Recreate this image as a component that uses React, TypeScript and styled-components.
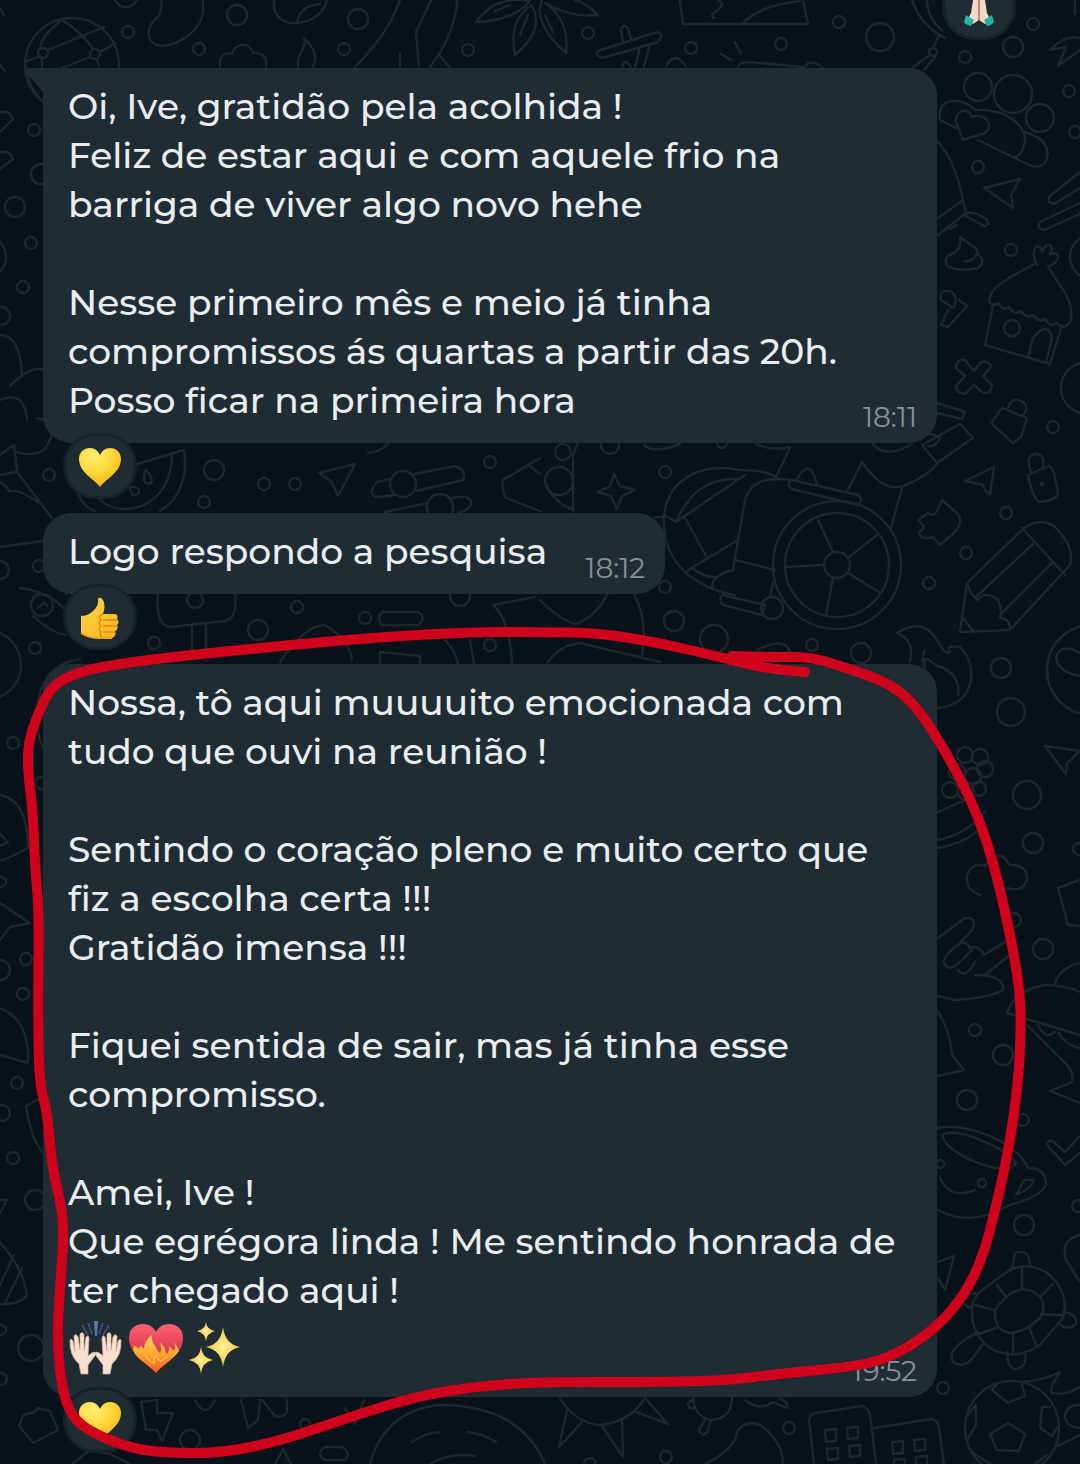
import React from "react"
import styled, {createGlobalStyle, css} from "styled-components"

const Color = {
  wall: "#07121a",
  doodle: "#1c272e",
  bubble: "#202c33",
  text: "#e9edef",
  time: "#87929a",
  marker: "#d0021b",
}

const GlobalStyle = createGlobalStyle`
  body {
    margin: 0;
    background: ${Color.wall};
    font-family: Montserrat, Inter, "Liberation Sans", sans-serif;
  }
`

let Screen = styled.main`
  position: relative;
  min-height: 100vh;
  overflow: hidden;
  background: ${Color.wall};
`
let Wallpaper = styled.svg`
  position: absolute;
  top: 0;
  left: 0;
  width: 100%;
  fill: none;
  stroke: ${Color.doodle};
  stroke-width: 2.4;
  stroke-linejoin: round;
  stroke-linecap: round;
`
let Marker = styled.svg`
  position: absolute;
  top: 0;
  left: 0;
  width: 100%;
  fill: none;
  stroke: ${Color.marker};
  stroke-width: 10;
  stroke-linejoin: round;
  stroke-linecap: round;
  pointer-events: none;
`
let Conversation = styled.div`
  position: relative;
  display: flex;
  flex-direction: column;
`
let Outgoing = styled.div`
  display: flex;
  justify-content: flex-end;
  align-items: flex-end;
  height: 40px;
  margin-bottom: 28px;
  padding-right: 64px;
`
let Thread = styled.div`
  display: flex;
  flex-direction: column;
  align-items: flex-start;
  gap: 14px;
  padding: 0 143px 0 43px;
`
let Message = styled.article<{$wide?: boolean}>`
  display: flex;
  flex-direction: column;
  align-items: flex-start;
  max-width: 100%;
  ${props => props.$wide && css`width: 100%;`}
`
let Bubble = styled.div<{$first?: boolean}>`
  position: relative;
  display: grid;
  box-sizing: border-box;
  width: 100%;
  padding: 14px 20px 18px 25px;
  border-radius: 28px;
  background: ${Color.bubble};
  ${props => props.$first && css`
    border-top-left-radius: 0;

    &::before {
      content: "";
      position: absolute;
      top: 0;
      left: -18px;
      width: 19px;
      height: 25px;
      background: ${Color.bubble};
      clip-path: path("M19 0H4Q-2 1 2 6L19 25Z");
    }
  `}
`
let Body = styled.div<{$inlineTime?: boolean}>`
  grid-area: 1 / 1;
  padding-right: ${props => props.$inlineTime ? 98 : 0}px;
`
let Text = styled.p`
  margin: 0;
  color: ${Color.text};
  font-size: 36px;
  font-weight: 500;
  line-height: 49px;
  white-space: pre-line;
`
let EmojiLine = styled.div`
  display: flex;
  gap: 6px;
  height: 58px;
  padding-top: 6px;
`
let Time = styled.time`
  grid-area: 1 / 1;
  place-self: end;
  color: ${Color.time};
  font-size: 28px;
  line-height: 32px;
  margin-bottom: -8px;
`
let Reaction = styled.button`
  display: flex;
  align-items: center;
  justify-content: center;
  width: 74px;
  height: 66px;
  margin: -10px 0 0 20px;
  padding: 3px 0 0;
  border: 3px solid #17222a;
  border-radius: 33px;
  background: ${Color.bubble};
  position: relative;
`

const HEART = "M22 40C16 32 1 25 1 12C1 5 6 1 12 1C17 1 20 4 22 8C24 4 27 1 32 1C38 1 43 5 43 12C43 25 28 32 22 40Z"

function YellowHeart() {
  return (
    <svg width="44" height="42" viewBox="0 0 44 42" role="img" aria-label="Coração amarelo">
      <defs>
        <radialGradient id="gold" cx="0.35" cy="0.2" r="0.9">
          <stop offset="0" stopColor="#ffed73"/>
          <stop offset="0.5" stopColor="#fdd835"/>
          <stop offset="1" stopColor="#f2a410"/>
        </radialGradient>
      </defs>
      <path d={HEART} fill="url(#gold)"/>
    </svg>
  )
}

function ThumbsUp() {
  return (
    <svg width="42" height="44" viewBox="0 0 42 44" role="img" aria-label="Joinha">
      <defs>
        <linearGradient id="skin" x2="1" y2="1">
          <stop offset="0" stopColor="#ffd54a"/>
          <stop offset="1" stopColor="#fbb41c"/>
        </linearGradient>
      </defs>
      <path d="M2 19Q9 19 14 14Q20 9 19 2Q21 -1 24 3Q27 9 24 17H36Q40 18 38 22Q41 25 38 28Q40 32 36 34Q38 39 33 41H19Q9 42 2 36Z" fill="url(#skin)"/>
      <path d="M24 23H38M24 29H38M24 35H36M24 17Q18 19 22 23Q18 26 22 29Q18 32 22 35Q20 38 24 41" fill="none" stroke="#e08a12" strokeWidth="1.4"/>
      <path d="M2 36Q10 41 19 41H33" fill="none" stroke="#eda515" strokeWidth="2"/>
    </svg>
  )
}

function PrayingHands() {
  return (
    <svg width="34" height="42" viewBox="0 0 34 42" role="img" aria-label="Mãos em oração">
      <path d="M16 1L11 12L9 25L6 31L11 36L17 32L23 36L28 31L25 25L23 12L18 1Z" fill="#f6d9c5"/>
      <path d="M17 2V32" stroke="#a3705e" strokeWidth="1.5"/>
      <path d="M4 27L12 32L9 38Q4 37 2 34ZM30 27L22 32L25 38Q30 37 32 34Z" fill="#1fb5a4"/>
    </svg>
  )
}

function RaisedHands() {
  const hand = "M13 53L11 43Q1 34 2 19Q3 17 5 20L7 31L6 15Q8 12 10 16L12 29L12 13Q15 10 16 14L16 30L18 16Q21 13 21 18L20 35Q24 31 27 31Q29 32 26 36L20 44V53Z"
  return (
    <svg width="55" height="54" viewBox="0 0 55 54" role="img" aria-label="Mãos para cima">
      <path d="M14 4L20 14M20 2L24 13M41 4L35 14M35 2L31 13" stroke="#42557e" strokeWidth="1.5"/>
      <path d="M26 0H30L29 15H27Z" fill="#5878b5"/>
      <g fill="#f8e0ce" stroke="#d9b29b" strokeWidth="0.7">
        <path d={hand}/>
        <path d={hand} transform="translate(55 0) scale(-1 1)"/>
      </g>
    </svg>
  )
}

function HeartOnFire() {
  return (
    <svg width="54" height="54" viewBox="0 0 54 54" role="img" aria-label="Coração em chamas">
      <defs>
        <linearGradient id="red" x2="0" y2="1">
          <stop offset="0" stopColor="#fa6274"/>
          <stop offset="1" stopColor="#cd1731"/>
        </linearGradient>
        <linearGradient id="fire" x2="0" y2="1">
          <stop offset="0" stopColor="#ffd56b"/>
          <stop offset="0.5" stopColor="#ffa62b"/>
          <stop offset="1" stopColor="#f15a24"/>
        </linearGradient>
      </defs>
      <path d="M27 52C20 43 0 34 0 17C0 8 6 3 14 3C21 3 25 7 27 11C29 7 33 3 40 3C48 3 54 8 54 17C54 34 34 43 27 52Z" fill="url(#red)"/>
      <path d="M27 52C20 44 6 37 4 29L5 24L10 28Q10 26 12 25L15 28Q15 20 23 14Q22 21 27 26Q29 31 31 32Q33 29 31 22Q36 24 37 33Q41 31 40 25L45 30Q47 26 45 21Q49 26 50 30C45 38 33 44 27 52Z" fill="url(#fire)"/>
      <path d="M16 33Q19 40 25 42Q24 36 27 34Q29 39 32 40Q36 38 38 35" fill="none" stroke="#ffcf5c" strokeWidth="1.5" opacity="0.7"/>
    </svg>
  )
}

function Sparkles() {
  return (
    <svg width="54" height="54" viewBox="0 0 54 54" role="img" aria-label="Brilhos">
      <defs>
        <radialGradient id="spark">
          <stop offset="0" stopColor="#fff09a"/>
          <stop offset="1" stopColor="#f6c637"/>
        </radialGradient>
      </defs>
      <g fill="url(#spark)">
        <path d="M34 6Q36 23 51 26Q36 29 34 46Q32 29 17 26Q32 23 34 6Z"/>
        <path d="M17 1Q18 9 26 10Q18 12 17 20Q16 12 8 10Q16 9 17 1Z"/>
        <path d="M12 26Q13 37 24 39Q13 41 12 53Q11 41 0 39Q11 37 12 26Z"/>
      </g>
    </svg>
  )
}

// x, y, radius
const RINGS = [
  [128, 32, 6], [237, 15, 10], [199, 49, 6], [358, 19, 10], [344, 49, 6], [468, 50, 6], [126, -5, 12],
  [72, 65, 47], [43, 53, 5], [95, 54, 5], [588, 33, 6], [691, 48, 6], [781, 44, 6], [839, 22, 6],
  [880, 37, 14], [1033, 24, 6], [965, 57, 6], [1013, 47, 10], [978, 87, 14], [1013, 94, 19], [1040, 118, 14],
  [1069, 91, 6], [978, 167, 6], [1011, 250, 6], [1012, 328, 8], [1053, 427, 6], [1075, 132, 6], [1087, 388, 26],
  [1092, 257, 22], [665, 472, 6], [1006, 513, 6], [966, 553, 6], [929, 583, 6], [665, 587, 6], [674, 621, 10],
  [714, 639, 14], [812, 645, 6], [861, 653, 10], [1001, 668, 10], [837, 565, 64], [837, 565, 52], [837, 565, 13],
  [772, 608, 11], [563, 452, 8], [559, 481, 14], [1092, 670, 45], [49, 475, 6], [214, 470, 10], [204, 502, 6],
  [264, 484, 6], [295, 484, 6], [490, 462, 6], [297, 607, 6], [258, 630, 10], [365, 618, 6], [154, 643, 6],
  [35, 648, 6], [490, 645, 6], [460, 596, 10], [39, 566, 6], [0, 570, 9], [403, 484, 13], [440, 507, 13],
  [195, 600, 8], [42, 605, 11], [-14, 665, 35], [34, 130, 6], [15, 207, 10], [31, 243, 6], [23, 287, 6],
  [41, 174, 10], [1, 316, 9], [-14, 257, 20], [13, 743, 6], [41, 783, 6], [26, 959, 6], [23, 994, 6],
  [0, 970, 10], [1, 882, 5], [17, 1083, 6], [2, 1113, 8], [13, 1158, 6], [35, 1200, 10], [31, 1348, 13],
  [1, 1330, 5], [1, 1379, 6], [190, 1440, 10], [305, 1424, 5], [789, 1428, 6], [666, 1457, 6], [943, 1388, 6],
  [590, 1464, 6], [1012, 1428, 47], [975, 1030, 6], [1003, 1055, 10], [967, 1100, 10], [1024, 1225, 10],
  [1023, 1120, 6], [1078, 1206, 6], [1011, 712, 14], [1027, 795, 14], [1033, 843, 10], [1043, 949, 10],
  [1014, 920, 7], [1079, 849, 6], [933, 52, 4], [965, 755, 8], [980, 757, 8], [957, 772, 8], [973, 776, 8],
  [985, 769, 8], [950, 790, 8], [966, 792, 8], [979, 789, 7], [1042, 484, 1], [940, 1164, 4], [982, 1183, 4],
  [722, 443, 5], [610, 445, 9],
]

const DOODLES = [
  // globe
  "M25 62L40 56M48 50L104 27M60 22Q42 35 40 48M42 58V68M62 20Q82 32 93 49M62 68L90 57M100 52L116 43M97 59L99 68M26 70Q30 90 43 102",
  // top edge
  "M161 0Q163 8 158 17C145 27 145 45 162 46C190 43 202 22 203 12V0",
  "M274 0C272 18 285 24 297 23C315 22 325 10 327 0M297 23Q300 5 320 4",
  "M220 67C218 57 224 52 232 54C235 42 250 42 253 53C262 52 268 58 266 67",
  "M304 38C308 48 295 55 298 67M304 38C316 50 317 58 313 67",
  "M400 0C392 25 372 50 355 67M431 0L416 32L419 67M457 0Q455 35 430 67M440 56L449 67M400 53V67",
  "M476 22Q495 -5 530 1Q515 20 476 22M495 11L510 5M515 55Q508 20 532 5Q545 30 515 55M520 35L528 15",
  "M566 53C545 35 535 15 542 0M566 53Q570 20 545 3Q570 18 598 15Q585 2 575 0M545 15L553 32",
  "M680 0L683 24H808L803 0M718 0C732 8 705 12 714 18M742 24Q760 5 800 1",
  "M598 51L657 32Q665 35 658 42L603 58Q594 56 598 51ZM623 42L621 30Q623 23 628 28L631 40M640 47L635 67M650 44L644 67M622 67Q625 57 631 67M666 67Q675 49 686 67M721 54L731 60M735 42L741 54M738 67Q740 60 760 63L803 67M805 67Q810 58 822 67",
  "M912 0Q920 25 945 38M927 0Q928 20 942 30M939 36L933 48M930 55L912 68M936 56L924 70M1050 50Q1065 34 1080 38M1050 50L1066 47L1058 66L1080 50M1075 0V14",
  // band-aid with heart
  "M956 128L940 120C936 98 960 95 975 110C1010 108 1030 130 1024 145Q1022 155 1015 157M1025 132C1045 138 1052 150 1045 163Q1038 170 1025 163L978 140M963 140L956 122C955 108 970 108 972 117C985 112 995 125 985 133Z",
  "M984 188L1020 179L1011 195L1013 208Z",
  "M938 142Q955 160 963 200L938 218M963 200L966 213L938 235M967 213Q975 211 987 220Q990 226 984 226L966 216M950 229L957 225",
  "M960 237C970 245 980 248 977 254Q987 261 978 268Q962 272 948 267Q942 257 952 254Q962 250 960 237ZM965 261Q972 262 976 255",
  "M941 300Q938 290 950 291Q960 297 953 308ZM948 310L941 325L948 327L967 306L959 300",
  // hut
  "M993 306L985 345L1050 364L1062 325M1034 264C1010 278 990 285 989 302Q995 307 998 303Q1004 312 1009 307Q1014 316 1021 311Q1026 319 1033 315Q1039 323 1045 319Q1050 328 1057 323Q1064 332 1071 320C1075 300 1058 285 1048 266M1037 265C1028 248 1040 240 1042 252C1046 240 1056 245 1050 254C1062 250 1060 262 1048 267M1028 357L1033 338Q1048 320 1052 338L1046 362",
  "M974 371L981 362Q989 360 991 367L983 376L992 385Q991 394 983 393L974 385L965 394Q956 394 956 386L965 376L956 368Q956 359 965 360Z",
  "M1080 172L1050 196Q1046 203 1054 204L1080 188M1080 203L1040 222Q1036 229 1044 230L1080 214",
  "M991 423L1002 408L1027 418L1021 437L1013 443ZM1008 408Q1012 395 1023 402Q1030 408 1022 416M937 403L965 412L962 419L937 413",
  // right of the second bubble
  "M872 443Q885 460 912 444M922 445L960 424L973 438L937 463ZM920 439Q930 430 940 438Q935 448 928 446",
  "M614 474L620 486L635 490L622 496L617 509L611 496L598 492L610 486Z",
  "M664 515C668 480 700 462 740 470Q770 470 780 480M664 515L676 522C690 490 710 478 738 479M676 522L745 475M655 517H664Q662 550 685 572Q705 590 735 595M685 518L706 556M685 572L738 540M790 480Q748 474 744 505L733 570Q712 575 712 587M735 560L775 570M692 568Q705 578 715 577",
  "M722 595L765 605L762 615L723 605Q718 600 722 595M773 582L770 597",
  "M792 480L858 495Q864 500 858 505L792 489Q785 484 792 480M797 479Q810 456 817 484M776 477L790 448M755 443Q770 452 790 447M848 490L862 462Q885 495 905 485Q925 478 938 463M902 488L891 528",
  "M818 520L833 552M877 535L848 558M785 567L824 565M833 578L826 615M848 573L879 592",
  "M918 520L928 513Q934 517 937 511L942 500L958 514Q963 522 956 531L940 545L933 537Q920 541 919 532Q926 528 922 524Z",
  "M965 481L994 467L990 494Q985 492 983 485Z",
  "M1028 475L1049 466Q1054 466 1058 494Q1055 501 1040 502Q1033 500 1028 475ZM1031 472Q1025 455 1035 454Q1045 453 1043 467",
  "M960 632L967 583L1024 528Q1042 516 1056 528Q1075 548 1070 565L1010 630ZM1022 528L1065 575M1033 544L976 597M1052 563L1000 615M967 583Q970 595 978 600Q985 590 998 600Q1003 612 1000 618Q1010 618 1010 630M963 618L974 632",
  "M897 633Q925 615 940 645Q945 655 950 652Q945 645 960 647C978 665 973 695 955 703Q945 708 937 708M897 633Q915 640 910 662M925 650Q920 662 925 668Q922 652 935 665C955 670 960 685 958 695M1080 653Q1060 642 1056 658Q1058 672 1080 676",
  // between the bubbles
  "M137 464L184 450C188 475 180 500 160 511M172 453C172 490 150 510 122 509Q108 508 98 498M78 495Q85 508 95 511M146 470Q155 480 150 484Q140 483 146 470M130 487Q142 486 138 494Q130 498 130 487",
  "M319 473L355 464L338 496L331 481Z",
  "M391 479L377 482Q367 493 376 497L395 495M415 474L455 466Q467 470 463 480L416 491M385 512L427 503M452 498Q472 494 471 504Q469 510 460 512M368 453Q380 452 388 444",
  "M540 458L503 480Q501 490 506 498L540 511M530 466L540 474M573 455V512M545 480Q550 500 573 510M573 455L578 443M644 444Q650 455 680 444",
  "M158 594Q155 625 170 627L225 621Q238 618 235 594M192 627V655M206 625V655M382 612H418Q427 618 418 625H382Q376 618 382 612Z",
  "M280 662Q305 625 325 625Q350 640 352 660M493 605L535 597M493 605Q510 620 512 664M380 664V652L420 656V664M445 640Q455 650 458 664M470 640L474 664",
  "M540 600Q560 620 576 624Q598 615 607 594M634 594Q648 620 642 655M548 662Q560 645 580 643Q610 650 660 662M757 650Q785 636 790 652",
  "M20 588Q50 592 65 610M33 616Q50 632 65 635M38 608Q45 600 47 606M66 585V594",
  // left edge
  "M0 112Q10 110 13 119L0 132M0 152Q10 150 13 159L0 169M0 335Q20 335 22 375L10 386Q30 365 45 370M0 400Q25 390 27 420M37 418Q62 423 45 449Q32 458 17 452M0 455L14 445L17 472L52 518M0 475L16 472M0 482Q8 487 10 492Q15 487 38 502M0 547L43 541",
  "M80 659Q40 665 37 710Q37 740 44 748M0 795Q28 800 28 848Q10 858 0 861M0 834L8 842L0 846M0 903L30 923L10 927L0 940M0 1008Q30 1020 28 1063L0 1055M43 1097L26 1106Q30 1135 42 1152M0 1243Q22 1265 27 1295Q20 1305 0 1304M14 1255L0 1285M22 1268L5 1303M0 1200L7 1200L0 1213M0 8L4 15M0 65L5 71",
  // bottom edge
  "M19 1426L23 1415L35 1412L38 1408L50 1411L58 1430L33 1443ZM141 1402L157 1400V1413L173 1413L162 1441L157 1430H146ZM195 1400Q205 1420 215 1400M241 1400L248 1428L258 1420L260 1400M262 1400L275 1416Q285 1418 287 1411V1400",
  "M370 1464Q385 1410 440 1405Q520 1405 545 1464M412 1442Q427 1432 440 1432M468 1432Q483 1434 496 1442M430 1464Q450 1452 475 1456M345 1408L355 1424L364 1400M325 1447H342Q352 1453 345 1460H325Q315 1453 325 1447M72 1464L90 1450L110 1454L130 1464M275 1464L283 1449L291 1464",
  "M560 1398Q575 1423 600 1425Q630 1422 645 1398L668 1424L636 1412M567 1410L559 1447L582 1422M602 1426L623 1457L622 1420",
  "M693 1398Q695 1418 712 1420Q732 1418 732 1398M706 1418L699 1430Q703 1438 707 1432L711 1420M693 1400Q685 1402 690 1408L695 1408M745 1400Q760 1412 773 1402L787 1408Q790 1404 780 1398M705 1464Q735 1450 738 1430Q755 1412 775 1440Q783 1450 783 1464",
  "M814 1464L809 1420Q810 1413 816 1413L862 1406Q868 1407 870 1415L876 1464M874 1428L932 1419Q938 1420 939 1427L944 1464M825 1430L836 1429V1441L826 1442ZM847 1428L858 1427V1438L848 1439ZM827 1449L838 1448V1459L828 1460ZM849 1446L860 1445V1456L850 1457ZM892 1442L903 1441V1453L893 1454ZM914 1440L925 1439V1450L915 1451ZM894 1464V1460L905 1459V1464M916 1464V1457L927 1456V1464",
  // football
  "M1008 1423L1025 1434L1019 1451L997 1450L990 1434ZM992 1390L1008 1403L1025 1396L1022 1384M992 1390L997 1384M1050 1407H1042L1040 1428L1052 1436L1057 1428M968 1415L976 1405V1425L968 1438M1022 1382Q1045 1380 1060 1372Q1048 1390 1052 1393Q1065 1396 1080 1387M1080 1405Q1065 1405 1065 1418Q1068 1428 1080 1428M1058 1446L1080 1435M972 1452L990 1464M1035 1464L1047 1455",
  // turtle
  "M972 1312Q970 1298 985 1288L1008 1271Q1030 1260 1050 1275Q1070 1295 1063 1318L1040 1345Q1015 1362 990 1348Q972 1335 972 1312ZM995 1315Q993 1308 1010 1294Q1025 1284 1038 1295Q1048 1305 1040 1318Q1025 1332 1010 1333Q995 1330 995 1315ZM1022 1268V1288M997 1285L1006 1297M975 1305L994 1310M976 1335L998 1327M1013 1353V1333M1037 1347L1029 1327M1063 1315L1041 1314M1053 1284L1040 1297M1012 1268L1015 1253Q1030 1248 1030 1266M1063 1312Q1078 1314 1076 1324Q1068 1332 1058 1323M1008 1352Q1006 1368 1016 1369Q1028 1367 1025 1352M976 1333Q945 1350 953 1362Q965 1370 975 1355L982 1345M976 1293Q962 1295 963 1301Q965 1307 972 1308",
  "M938 1262L954 1256L945 1290L938 1278M938 1012Q950 1030 952 1055L964 1070L938 1076",
  // cup
  "M937 1128C965 1122 1015 1140 1028 1168M942 1135C955 1125 1010 1150 1016 1163C1010 1180 945 1155 942 1135ZM940 1178Q950 1200 975 1190M938 1210Q970 1228 1010 1205Q1045 1195 1046 1183Q1045 1168 1028 1168M1016 1195L1024 1180H1034Q1032 1188 1016 1195M1047 1143Q1051 1138 1055 1143L1065 1152L1080 1136M1047 1145L1065 1165L1080 1153",
  "M1007 1013Q1015 990 1045 985Q1065 985 1080 992M1055 983Q1060 968 1080 963M1007 1013L1080 1035M1027 1025L1060 1058Q1075 1070 1072 1082L1050 1091L1080 1103M1038 1025Q1045 1040 1055 1032M1058 1032Q1065 1045 1080 1048M1080 1235Q1060 1240 1066 1260L1080 1282",
  // right edge
  "M1045 746L1080 751L1067 763L1066 774ZM938 812Q965 800 978 795M938 840Q965 835 985 812M938 848Q965 843 978 830M980 895Q965 890 967 875Q972 862 985 866Q998 845 1010 865Q1028 865 1027 880Q1022 893 1007 888M1080 880L1058 888L1068 925L1080 926",
  "M938 938L965 918Q978 917 972 930L958 945Q940 958 945 965Q950 972 962 960M958 945Q965 939 970 948Q980 945 984 955L1008 940M958 970Q965 980 975 962M962 960L972 950M985 975L1010 955M975 975Q1005 975 1003 990Q990 998 955 1000L938 996",
]

const MARKER_POINTS = [
  [805, 672], [766, 669], [720, 657], [660, 643], [600, 633], [540, 632], [470, 632], [380, 637], [290, 645],
  [200, 654], [130, 662], [80, 671], [52, 685], [38, 713], [28, 743], [28, 773], [33, 813], [35, 867],
  [39, 910], [38, 1000], [39, 1083], [47, 1110], [52, 1167], [61, 1204], [64, 1233], [60, 1287], [57, 1340],
  [62, 1390], [72, 1417], [92, 1433], [133, 1449], [170, 1453], [223, 1453], [283, 1440], [350, 1417],
  [417, 1396], [480, 1386], [540, 1382], [640, 1382], [722, 1381], [777, 1374], [851, 1367], [890, 1358],
  [933, 1331], [964, 1296], [983, 1257], [997, 1203], [1010, 1143], [1018, 1083], [1021, 1033], [1020, 990],
  [1010, 933], [993, 860], [973, 803], [943, 747], [917, 707], [891, 684], [850, 669], [812, 657], [775, 657], [732, 656],
]

// rounds a hand drawn line through the middles of its segments
function strokePath(points: number[][]) {
  let d = `M${points[0].join(" ")}`
  for (let i = 1; i < points.length - 1; i++) {
    let [x, y] = points[i]
    let [nx, ny] = points[i + 1]
    d += `Q${x} ${y} ${(x + nx) / 2} ${(y + ny) / 2}`
  }
  return d + `L${points[points.length - 1].join(" ")}`
}

const FIRST = `Oi, Ive, gratidão pela acolhida !
Feliz de estar aqui e com aquele frio na
barriga de viver algo novo hehe

Nesse primeiro mês e meio já tinha
compromissos ás quartas a partir das 20h.
Posso ficar na primeira hora`

const THIRD = `Nossa, tô aqui muuuuito emocionada com
tudo que ouvi na reunião !

Sentindo o coração pleno e muito certo que
fiz a escolha certa !!!
Gratidão imensa !!!

Fiquei sentida de sair, mas já tinha esse
compromisso.

Amei, Ive !
Que egrégora linda ! Me sentindo honrada de
ter chegado aqui !`

function App() {
  return (
    <Screen>
      <GlobalStyle/>
      <Wallpaper viewBox="0 0 1080 1464" aria-hidden="true">
        {RINGS.map(([x, y, r]) => <circle key={`${x}-${y}-${r}`} cx={x} cy={y} r={r}/>)}
        {DOODLES.map(d => <path key={d} d={d}/>)}
      </Wallpaper>
      <Conversation>
        <Outgoing>
          <Reaction aria-label="Reação: mãos em oração"><PrayingHands/></Reaction>
        </Outgoing>
        <Thread>
          <Message $wide>
            <Bubble $first>
              <Body><Text>{FIRST}</Text></Body>
              <Time dateTime="18:11">18:11</Time>
            </Bubble>
            <Reaction aria-label="Reação: coração amarelo"><YellowHeart/></Reaction>
          </Message>
          <Message>
            <Bubble>
              <Body $inlineTime><Text>Logo respondo a pesquisa</Text></Body>
              <Time dateTime="18:12">18:12</Time>
            </Bubble>
            <Reaction aria-label="Reação: joinha"><ThumbsUp/></Reaction>
          </Message>
          <Message $wide>
            <Bubble>
              <Body>
                <Text>{THIRD}</Text>
                <EmojiLine>
                  <RaisedHands/>
                  <HeartOnFire/>
                  <Sparkles/>
                </EmojiLine>
              </Body>
              <Time dateTime="19:52">19:52</Time>
            </Bubble>
            <Reaction aria-label="Reação: coração amarelo"><YellowHeart/></Reaction>
          </Message>
        </Thread>
      </Conversation>
      <Marker viewBox="0 0 1080 1464" aria-hidden="true">
        <path d={strokePath(MARKER_POINTS)}/>
      </Marker>
    </Screen>
  )
}

export default App
